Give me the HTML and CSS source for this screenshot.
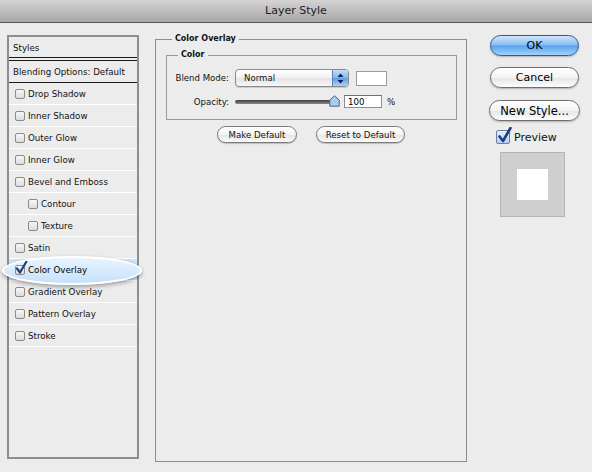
FILE: index.html
```html
<!DOCTYPE html>
<html lang="en">
<head>
    <meta charset="UTF-8">
    <title>Layer Style</title>
    <link rel="stylesheet" href="styles.css">
</head>
<body>
    <div class="janela">
        <div class="barra-titulo">Layer Style</div>

        <div class="dialogo">
            <!-- lista de efeitos -->
            <ul class="lista">
                <li class="cabecalho">Styles</li>
                <li class="mistura">Blending Options: Default</li>
                <li><span class="caixa"></span>Drop Shadow</li>
                <li><span class="caixa"></span>Inner Shadow</li>
                <li><span class="caixa"></span>Outer Glow</li>
                <li><span class="caixa"></span>Inner Glow</li>
                <li><span class="caixa"></span>Bevel and Emboss</li>
                <li class="sub"><span class="caixa"></span>Contour</li>
                <li class="sub"><span class="caixa"></span>Texture</li>
                <li><span class="caixa"></span>Satin</li>
                <li class="ativo">
                    <span class="oval"></span>
                    <span class="caixa marcada">
                        <svg width="13" height="14" viewBox="0 0 13 14"><path d="M2 7.5 L5 11.5 L11.5 0.5" fill="none" stroke="#1d3f86" stroke-width="2.2" stroke-linecap="round" stroke-linejoin="round"/></svg>
                    </span>
                    <span class="rotulo">Color Overlay</span>
                </li>
                <li><span class="caixa"></span>Gradient Overlay</li>
                <li><span class="caixa"></span>Pattern Overlay</li>
                <li><span class="caixa"></span>Stroke</li>
            </ul>

            <fieldset class="painel">
                <legend>Color Overlay</legend>
                <fieldset class="grupo">
                    <legend>Color</legend>
                    <div class="linha">
                        <label>Blend Mode:</label>
                        <div class="popup">
                            Normal
                            <span class="setas">
                                <svg width="7" height="11" viewBox="0 0 7 11"><path d="M3.5 0.5 L6.5 4 L0.5 4 Z M3.5 10.5 L6.5 7 L0.5 7 Z" fill="#10204a"/></svg>
                            </span>
                        </div>
                        <span class="amostra"></span>
                    </div>
                    <div class="linha">
                        <label>Opacity:</label>
                        <div class="slider">
                            <span class="trilho"></span>
                            <svg class="cursor" width="11" height="12" viewBox="0 0 11 12"><path d="M5.5 0.8 L10.2 5 L10.2 11.2 L0.8 11.2 L0.8 5 Z" fill="#a9cdf2" stroke="#4d6585" stroke-width="1"/></svg>
                        </div>
                        <input class="campo" type="text" value="100">
                        <span class="pct">%</span>
                    </div>
                </fieldset>
                <div class="padroes">
                    <button class="mini">Make Default</button>
                    <button class="mini">Reset to Default</button>
                </div>
            </fieldset>

            <div class="acoes">
                <button class="aqua ok">OK</button>
                <button class="aqua">Cancel</button>
                <button class="aqua">New Style...</button>
                <div class="previa">
                    <span class="caixa grande">
                        <svg width="15" height="17" viewBox="0 0 15 17"><path d="M2.5 9.5 L6 14 L13.5 1" fill="none" stroke="#1d3f86" stroke-width="2.6" stroke-linecap="round" stroke-linejoin="round"/></svg>
                    </span>Preview
                </div>
                <div class="miniatura"><span></span></div>
            </div>
        </div>
    </div>
</body>
</html>
```

FILE: styles.css
```css
* {
    margin: 0;
    padding: 0;
    box-sizing: border-box;
}
body {
    background-color: #ececec;
    font-family: "DejaVu Sans", sans-serif;
    color: #111;
}
.janela {
    width: 592px;
    height: 472px;
    overflow: hidden;
}
.barra-titulo {
    height: 23px;
    line-height: 22px;
    text-align: center;
    font-size: 11px;
    color: #1c1c1c;
    background: linear-gradient(#d4d4d4, #a7a7a7);
    border-bottom: 1px solid #5a5a5a;
}
.dialogo {
    display: flex;
    align-items: flex-start;
    padding: 10px 0 0 7px;
}

/* lista da esquerda */
.lista {
    list-style: none;
    width: 132px;
    height: 424px;
    margin-top: 2px;
    border: 2px solid #8e8e8e;
    font-size: 8.7px;
    position: relative;
}
.lista li {
    height: 22px;
    padding-top: 1px;
    display: flex;
    align-items: center;
    border-bottom: 1px solid #fff;
    position: relative;
}
.lista .cabecalho {
    height: 24px;
    padding-left: 4px;
    border-bottom: 4px double #1a1a1a;
}
.lista .mistura {
    padding-left: 4px;
    border-bottom: 1px solid #1a1a1a;
}
.caixa {
    width: 10px;
    height: 10px;
    margin: 0 3px 0 6px;
    border: 1px solid #8a8a8a;
    border-radius: 2px;
    background: linear-gradient(#f7f7f7, #dcdcdc);
    position: relative;
    z-index: 1;
    flex-shrink: 0;
}
.lista .sub .caixa {
    margin-left: 19px;
}
.caixa svg {
    position: absolute;
    left: -1px;
    top: -5px;
}
.lista .ativo {
    background-color: #cde3fb;
    z-index: 2;
}
.oval {
    position: absolute;
    left: -7px;
    top: -3px;
    width: 140px;
    height: 29px;
    border: 2px solid #fff;
    border-radius: 50%;
    background: linear-gradient(#e8f4ff, #c6e1fb);
    box-shadow: 0 2px 4px rgba(0, 0, 0, 0.35);
}
.rotulo {
    position: relative;
    z-index: 1;
    color: #000;
}

/* painel central */
fieldset {
    border: 1px solid #8c8c8c;
}
legend {
    font-weight: bold;
    font-size: 8px;
    line-height: 12px;
    padding: 0 3px;
}
.painel {
    width: 312px;
    height: 429px;
    margin-left: 16px;
    padding: 0 9px 0 10px;
}
.painel > legend {
    margin-left: 6px;
}
.grupo {
    margin-top: 4px;
    padding: 0 8px 11px 8px;
    border-color: #999;
}
.grupo > legend {
    margin-left: 3px;
}
.linha {
    display: flex;
    align-items: center;
    font-size: 8.6px;
    margin-top: 8px;
}
.linha label {
    width: 54px;
    margin-right: 6px;
    text-align: right;
}
.popup {
    width: 114px;
    height: 18px;
    display: flex;
    align-items: center;
    padding-left: 8px;
    border: 1px solid #8a8a8a;
    border-radius: 4px;
    background: linear-gradient(#ffffff, #f1f1f1 50%, #e3e3e3 51%, #f6f6f6);
    box-shadow: 0 1px 1px rgba(0, 0, 0, 0.15);
    position: relative;
    overflow: hidden;
}
.setas {
    position: absolute;
    right: 0;
    top: 0;
    width: 16px;
    height: 16px;
    display: flex;
    align-items: center;
    justify-content: center;
    border-left: 1px solid #5d7fb5;
    background: linear-gradient(#c3defa, #82b6ee 50%, #5c9ae6 51%, #a7d4fb);
}
.amostra {
    width: 31px;
    height: 15px;
    margin-left: 7px;
    background-color: #fff;
    border: 1px solid #9a9a9a;
}
.slider {
    width: 106px;
    height: 13px;
    position: relative;
    display: flex;
    align-items: center;
}
.trilho {
    width: 98px;
    height: 4px;
    border-radius: 2px;
    background: linear-gradient(#3c3c3c, #8a8a8a);
}
.cursor {
    position: absolute;
    left: 94px;
    top: 0;
}
.campo {
    width: 38px;
    height: 13px;
    margin-left: 3px;
    padding-left: 3px;
    font: 8.6px "DejaVu Sans", sans-serif;
    border: 1px solid #8e8e8e;
    border-top-color: #6e6e6e;
    background: #fff;
    outline: none;
}
.pct {
    margin-left: 5px;
}
.padroes {
    display: flex;
    justify-content: center;
    gap: 19px;
    margin-top: 6px;
    margin-left: -1px;
}
.mini {
    height: 17px;
    padding: 0 4px;
    font: 8.6px "DejaVu Sans", sans-serif;
    color: #111;
    border: 1px solid #7a7a7a;
    border-radius: 9px;
    background: linear-gradient(#ffffff, #f3f3f3 50%, #e4e4e4 51%, #fbfbfb);
    box-shadow: 0 1px 1px rgba(0, 0, 0, 0.2);
}
.mini:first-child {
    width: 80px;
}
.mini:last-child {
    width: 89px;
}

/* coluna dos botoes */
.acoes {
    width: 91px;
    margin: 2px 0 0 22px;
    display: flex;
    flex-direction: column;
    align-items: center;
}
.aqua {
    width: 89px;
    height: 21px;
    font: 11px "DejaVu Sans", sans-serif;
    color: #000;
    border: 1px solid #6f6f6f;
    border-radius: 11px;
    background: linear-gradient(#ffffff, #f4f4f4 50%, #e5e5e5 51%, #fdfdfd);
    box-shadow: 0 1px 2px rgba(0, 0, 0, 0.25);
    margin-bottom: 11px;
}
.aqua:nth-child(3) {
    width: 91px;
    margin-top: 1px;
    font-size: 11.5px;
}
.ok {
    border-color: #32579a;
    background: linear-gradient(#cfe6fd, #8ac0f3 45%, #5aa3ec 52%, #9fd2fd);
}
.previa {
    align-self: flex-start;
    display: flex;
    align-items: center;
    margin: -2px 0 0 7px;
    font-size: 11px;
}
.caixa.grande {
    width: 14px;
    height: 14px;
    margin: 0 4px 0 0;
    border-color: #6b7e9c;
    background: linear-gradient(#e5f0fc, #b7d1f0);
}
.caixa.grande svg {
    left: 0;
    top: -4px;
}
.miniatura {
    width: 65px;
    height: 65px;
    margin: 8px 0 0 -4px;
    border: 1px solid #b4b4b4;
    background-color: #cfcfcf;
    display: flex;
    align-items: center;
    justify-content: center;
}
.miniatura span {
    width: 31px;
    height: 31px;
    background-color: #fff;
}
```
